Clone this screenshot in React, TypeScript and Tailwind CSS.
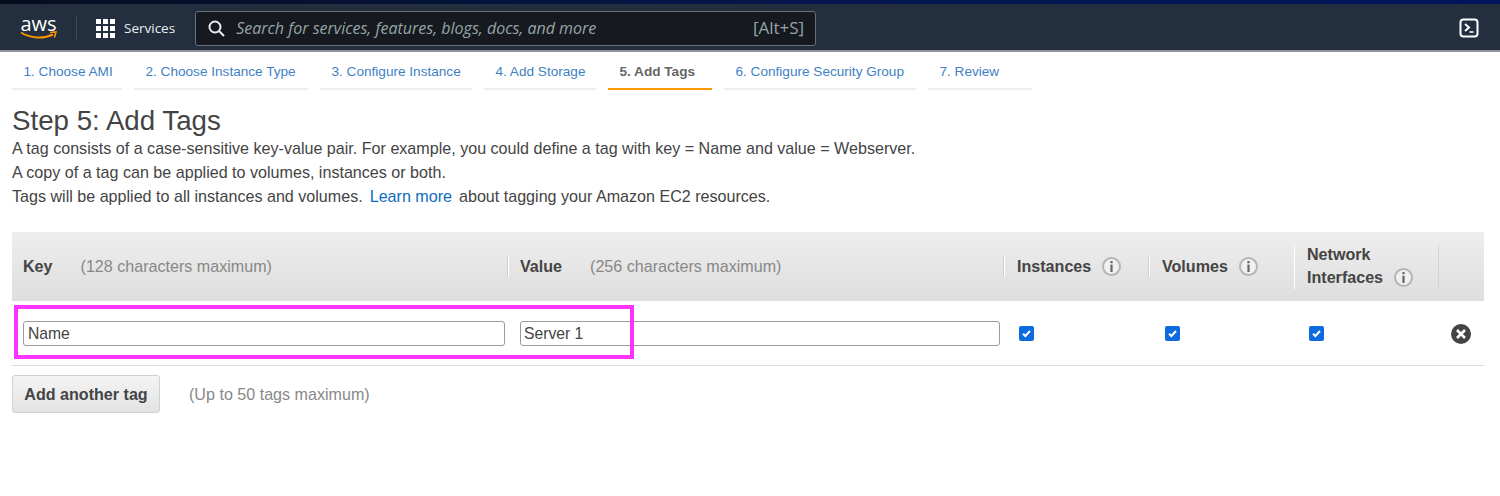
import React from 'react';

const steps = [
  { label: '1. Choose AMI', width: 'w-[110px]' },
  { label: '2. Choose Instance Type', width: 'w-[174px]' },
  { label: '3. Configure Instance', width: 'w-[152px]' },
  { label: '4. Add Storage', width: 'w-[112px]' },
  { label: '5. Add Tags', width: 'w-[104px]', active: true },
  { label: '6. Configure Security Group', width: 'w-[192px]' },
  { label: '7. Review', width: 'w-[104px]' },
];

function InfoIcon() {
  return (
    <span className="inline-flex h-[19px] w-[19px] shrink-0 items-center justify-center rounded-full border-2 border-[#b5b5b5] bg-[#f0f0f0]">
      <svg width="5" height="11" viewBox="0 0 5 11">
        <rect x="1.4" y="0" width="2.2" height="2.2" fill="#666" />
        <rect x="1.4" y="3.6" width="2.2" height="7.4" fill="#666" />
      </svg>
    </span>
  );
}

function Check() {
  return (
    <span className="flex h-[15px] w-[15px] items-center justify-center rounded-[2px] bg-[#0d6be0]">
      <svg width="11" height="11" viewBox="0 0 11 11" fill="none">
        <path d="M2 5.8 L4.4 8 L9 3" stroke="#fff" strokeWidth="2" />
      </svg>
    </span>
  );
}

function Divider() {
  return <span className="h-[21px] w-[2px] border-r border-r-white bg-[#d0d0d0]" />;
}

export default function App() {
  return (
    <div className="relative h-[496px] w-[1500px] overflow-hidden bg-white font-['Liberation_Sans',Arial,sans-serif] text-[16.1px] text-[#444]">
      {/* top bar */}
      <div className="h-[4px] bg-gradient-to-r from-[#050d1f] via-[#04164a] to-[#03135c]" />
      <div className="flex h-[48px] items-center border-b-2 border-b-[#8d949c] bg-[#232f3e] pt-[2px]">
        <div className="ml-[20px] flex w-[37px] flex-col items-center">
          <span className="font-['Open_Sans',sans-serif] text-[20px] leading-[16px] text-white">aws</span>
          <svg width="37" height="9" viewBox="0 0 37 9" fill="none" className="-mt-[1px]">
            <path d="M1 1.5 C10 7.5 24 8 33 3.5" stroke="#f79400" strokeWidth="2" />
            <path d="M30 1.5 L36 1 L34.5 6.5" stroke="#f79400" strokeWidth="1.6" />
          </svg>
        </div>
        <span className="ml-[19px] h-[25px] w-px bg-[#3c4858]" />
        <div className="ml-[19px] grid grid-cols-3 gap-[2px]">
          {Array.from({ length: 9 }).map((_, i) => (
            <span key={i} className="h-[5px] w-[5px] bg-white" />
          ))}
        </div>
        <span className="ml-[9px] font-['Open_Sans',sans-serif] text-[13.5px] text-[#eaeded]">Services</span>
        <div className="ml-[20px] flex h-[35px] w-[621px] items-center rounded-[3px] border border-[#687078] bg-[#16191f] pr-[11px] pl-[12px]">
          <svg width="17" height="17" viewBox="0 0 17 17" fill="none">
            <circle cx="7" cy="7" r="5.5" stroke="#eaeded" strokeWidth="2" />
            <path d="M11 11 L16 16" stroke="#eaeded" strokeWidth="2" />
          </svg>
          <span className="ml-[11px] flex-1 font-['Open_Sans',sans-serif] text-[16px] text-[#95a5a6] italic">
            Search for services, features, blogs, docs, and more
          </span>
          <span className="font-['Open_Sans',sans-serif] text-[17px] text-[#95a5a6]">[Alt+S]</span>
        </div>
        <svg width="20" height="20" viewBox="0 0 20 20" fill="none" className="mr-[21px] ml-auto">
          <rect x="1.5" y="1.5" width="17" height="17" rx="3" stroke="#fff" strokeWidth="2" />
          <path d="M6 6 L10 9.5 L6 13" stroke="#fff" strokeWidth="2" />
          <path d="M10.5 14 H14.5" stroke="#fff" strokeWidth="1.6" />
        </svg>
      </div>

      {/* wizard steps */}
      <div className="flex h-[38px] gap-[12px] pl-[12px]">
        {steps.map((s) => (
          <div
            key={s.label}
            className={`flex items-center border-b-2 pt-[5px] pl-[11.5px] text-[13.6px] ${s.width} ${
              s.active ? 'border-b-[#ff9900] font-bold text-[#666]' : 'border-b-[#eeeeee] text-[#3f7fc4]'
            }`}
          >
            {s.label}
          </div>
        ))}
      </div>

      {/* heading */}
      <div className="px-[12px] pt-[15px]">
        <h1 className="text-[27.7px] leading-[31px] text-[#444]">Step 5: Add Tags</h1>
        <p className="leading-[24px]">A tag consists of a case-sensitive key-value pair. For example, you could define a tag with key = Name and value = Webserver.</p>
        <p className="leading-[24px]">A copy of a tag can be applied to volumes, instances or both.</p>
        <p className="leading-[24px]">
          Tags will be applied to all instances and volumes.
          <a className="mx-[7px] text-[#0f6cbd]">Learn more</a>
          about tagging your Amazon EC2 resources.
        </p>
      </div>

      {/* table */}
      <div className="mt-[24px] ml-[12px] w-[1472px]">
        <div className="grid h-[69px] grid-cols-[497px_496px_145px_145px_144px_45px] items-center bg-gradient-to-b from-[#eeeeee] to-[#dedede]">
          <div className="flex items-center justify-between pl-[11px]">
            <span>
              <b>Key</b>
              <span className="ml-[28px] text-[#888]">(128 characters maximum)</span>
            </span>
            <Divider />
          </div>
          <div className="flex items-center justify-between pl-[11px]">
            <span>
              <b>Value</b>
              <span className="ml-[28px] text-[#888]">(256 characters maximum)</span>
            </span>
            <Divider />
          </div>
          <div className="flex items-center justify-between pl-[12px]">
            <span className="flex items-center gap-[11px]">
              <b>Instances</b>
              <InfoIcon />
            </span>
            <Divider />
          </div>
          <div className="flex items-center justify-between pl-[12px]">
            <span className="flex items-center gap-[11px]">
              <b>Volumes</b>
              <InfoIcon />
            </span>
            <span className="h-[44px] w-px bg-white" />
          </div>
          <div className="flex items-center justify-between pl-[12px]">
            <div className="mb-[2px] leading-[23px] font-bold">
              Network
              <div className="flex items-center gap-[11px]">
                Interfaces
                <InfoIcon />
              </div>
            </div>
            <span className="h-[44px] w-px bg-[#d4d4d4]" />
          </div>
          <div />
        </div>

        <div className="grid h-[65px] grid-cols-[497px_496px_145px_145px_144px_45px] items-center border-b border-b-[#dddddd] pt-[1px]">
          <div className="pr-[4px] pl-[11px]">
            <div className="flex h-[25px] items-center rounded-[3px] border border-[#9a9aa2] pt-[1px] pl-[4px] text-[15.7px] text-[#444]">Name</div>
          </div>
          <div className="pr-[5px] pl-[11px]">
            <div className="flex h-[25px] items-center rounded-[3px] border border-[#9a9aa2] pt-[1px] pl-[3px] text-[15.7px] text-[#444]">Server 1</div>
          </div>
          <div className="pl-[14px]"><Check /></div>
          <div className="pl-[15px]"><Check /></div>
          <div className="pl-[14px]"><Check /></div>
          <div className="flex justify-end pr-[13px]">
            <span className="flex h-[20px] w-[20px] items-center justify-center rounded-full bg-[#444]">
              <svg width="10" height="10" viewBox="0 0 10 10">
                <path d="M1 1 L9 9 M9 1 L1 9" stroke="#fff" strokeWidth="2.6" />
              </svg>
            </span>
          </div>
        </div>

        <div className="mt-[9px] flex items-center">
          <button className="h-[38px] w-[148px] rounded-[3px] border border-[#d0d0d0] bg-gradient-to-b from-[#f4f4f4] to-[#e3e3e3] font-bold text-[#444]">
            Add another tag
          </button>
          <span className="ml-[29px] text-[#888]">(Up to 50 tags maximum)</span>
        </div>
      </div>

      {/* annotation box */}
      <div className="absolute top-[305px] left-[14px] h-[54px] w-[620px] border-4 border-[#ff33ff]" />
    </div>
  );
}
